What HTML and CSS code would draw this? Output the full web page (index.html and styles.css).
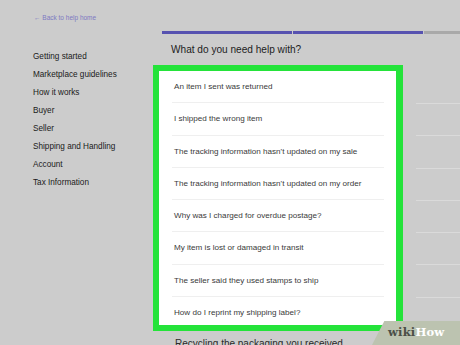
FILE: index.html
```
<!DOCTYPE html>
<html lang="en">
<head>
  <meta charset="UTF-8" />
  <meta name="viewport" content="width=device-width, initial-scale=1.0"/>
  <title>Help - Shipping and Handling</title>
  <link rel="stylesheet" href="styles.css">
</head>
<body>

  <div class="top">
    <a class="back" href="#">← Back to help home</a>
  </div>

  <div class="page">
    <ul class="nav">
      <li>Getting started</li>
      <li>Marketplace guidelines</li>
      <li>How it works</li>
      <li>Buyer</li>
      <li>Seller</li>
      <li>Shipping and Handling</li>
      <li>Account</li>
      <li>Tax Information</li>
    </ul>

    <div class="main">
      <div class="progress">
        <span class="step done"></span>
        <span class="step done"></span>
        <span class="step"></span>
      </div>

      <h2>What do you need help with?</h2>

      <div class="topics">
        <ul class="card">
          <li>An item I sent was returned</li>
          <li>I shipped the wrong item</li>
          <li>The tracking information hasn't updated on my sale</li>
          <li>The tracking information hasn't updated on my order</li>
          <li>Why was I charged for overdue postage?</li>
          <li>My item is lost or damaged in transit</li>
          <li>The seller said they used stamps to ship</li>
          <li>How do I reprint my shipping label?</li>
        </ul>
        <div class="rest">
          <span></span><span></span><span></span><span></span>
          <span></span><span></span><span></span>
        </div>
      </div>

      <p class="more">Recycling the packaging you received</p>
    </div>
  </div>

  <div class="wm"><span class="wiki">wiki</span><span class="how">How</span></div>

</body>
</html>
```

FILE: styles.css
```
* {
  box-sizing: border-box;
  margin: 0;
  padding: 0;
}

html, body {
  height: 100%;
  overflow: hidden;
}

body {
  background-color: #cccccc;
  color: #222;
  font-family: "Liberation Sans", Arial, sans-serif;
  position: relative;
}

.top {
  height: 20px;
  padding: 6px 0 0 34px;
}

.back {
  color: #7d79c2;
  font-size: 6.5px;
  text-decoration: none;
}

.page {
  display: flex;
  padding-left: 33px;
}

.nav {
  list-style: none;
  flex: 0 0 120px;
  padding-top: 28px;
}

.nav li {
  font-size: 8.2px;
  height: 18px;
  line-height: 18px;
  white-space: nowrap;
  color: #1a1a1a;
}

.main {
  flex: 1;
  min-width: 0;
  overflow: hidden;
}

.progress {
  display: flex;
  gap: 1px;
  margin: 11px 0 0 9px;
  height: 3px;
  overflow: hidden;
}

.step {
  flex: 0 0 130px;
  background-color: #a9a9a9;
}

.step.done {
  background-color: #5752b0;
}

h2 {
  font-size: 10.1px;
  font-weight: normal;
  color: #1c1c1c;
  padding-left: 18px;
  height: 31px;
  line-height: 32px;
}

.topics {
  display: flex;
}

.card {
  list-style: none;
  flex: 0 0 250px;
  height: 266px;
  overflow: hidden;
  background-color: #fff;
  border: 6px solid #24e33a;
  border-right-width: 7px;
}

.card li {
  height: 32.3px;
  line-height: 32px;
  margin: 0 12px 0 13px;
  padding-left: 2px;
  font-size: 8.1px;
  white-space: nowrap;
  color: #3a3a3a;
  border-bottom: 1px solid #efefef;
}

.rest {
  flex: 1;
  padding: 38px 0 0 13px;
  display: flex;
  flex-direction: column;
}

.rest span {
  height: 32.3px;
  border-top: 1px solid #dadada;
}

.more {
  font-size: 10px;
  padding: 7px 0 0 22px;
  white-space: nowrap;
  color: #2a2a2a;
}

.wm {
  position: absolute;
  right: 0;
  bottom: 0;
  width: 88px;
  height: 24px;
  background-color: #bcc3b0;
  clip-path: polygon(14% 0, 100% 0, 100% 100%, 0 100%);
  font-family: "DejaVu Serif", serif;
  font-weight: bold;
  font-size: 11.5px;
  padding: 4px 0 0 16px;
  letter-spacing: 0.2px;
}

.wiki {
  color: #4b4f47;
}

.how {
  color: #fff;
}
```
